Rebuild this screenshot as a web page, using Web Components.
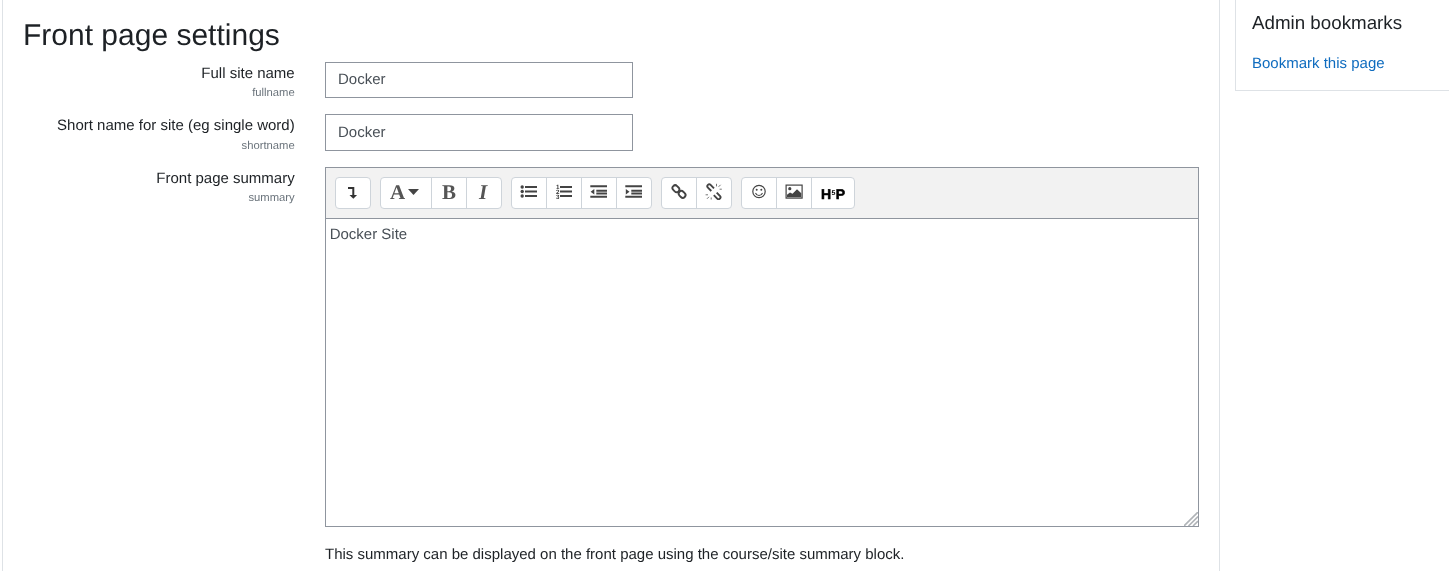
<!DOCTYPE html>
<html lang="en"><head><meta charset="utf-8"><title>Front page settings</title>
<style>
html,body{margin:0;height:571px;overflow:hidden;background:#fff;font:15px/22.5px "Liberation Sans",Arial,sans-serif;color:#1d2125;text-rendering:geometricPrecision}
</style></head><body>
<fp-page>
  <fp-main heading="Front page settings">
    <fp-row label="Full site name" name="fullname"><fp-input value="Docker"></fp-input></fp-row>
    <fp-row label="Short name for site (eg single word)" name="shortname"><fp-input value="Docker"></fp-input></fp-row>
    <fp-row label="Front page summary" name="summary">
      <fp-editor>Docker Site</fp-editor>
      <fp-help>This summary can be displayed on the front page using the course/site summary block.</fp-help>
    </fp-row>
  </fp-main>
  <fp-block slot="side" heading="Admin bookmarks"><a href="#">Bookmark this page</a></fp-block>
</fp-page>
<script>
function def(name,css,html){
  customElements.define(name,class extends HTMLElement{
    connectedCallback(){
      if(this.shadowRoot)return;
      const r=this.attachShadow({mode:'open'});
      r.innerHTML='<style>'+css+'</style>'+(typeof html==='function'?html(this):html);
    }
  });
}
const esc=s=>String(s||'').replace(/&/g,'&amp;').replace(/</g,'&lt;');
def('fp-page',`:host{display:flex;align-items:flex-start;height:571px;overflow:hidden;padding-left:2px;box-sizing:border-box;will-change:transform}
 ::slotted(fp-block){margin-left:15px}`,`<slot></slot><slot name="side"></slot>`);
def('fp-main',`:host{display:block;width:1218px;height:571px;box-sizing:border-box;border:solid #dee2e6;border-width:0 1px;padding:18px 20px 0}
 h2{margin:0 0 7.8px;font:400 30px/36px "Liberation Sans",Arial,sans-serif;color:#1d2125}`,
 h=>`<h2>${esc(h.getAttribute('heading'))}</h2><slot></slot>`);
def('fp-row',`:host{display:grid;grid-template-columns:271.7px 1fr;column-gap:30.3px;margin-bottom:16px}
 .l{text-align:right;height:36.5px;padding-top:1px;box-sizing:border-box}
 label{display:block;color:#1d2125}
 small{display:block;font-size:11.25px;line-height:16.5px;color:#6a737b;margin-top:-.1px}`,
 h=>`<div class="l"><label>${esc(h.getAttribute('label'))}</label><small>${esc(h.getAttribute('name'))}</small></div><div><slot></slot></div>`);
def('fp-input',`:host{display:block;width:308px;height:36.5px;box-sizing:border-box;border:1px solid #8f959e;padding:6.4px 12px 5px;color:#495057;background:#fff}`,
 h=>esc(h.getAttribute('value')));
def('fp-help',`:host{display:block;margin-top:17px}`,`<slot></slot>`);
def('fp-group',`:host{display:inline-flex;height:32px;box-sizing:border-box;border:1px solid #ced4da;border-radius:4px;background:#fff;overflow:hidden;margin-right:9px}
 ::slotted(fp-tool:not(:last-child)){border-right:1px solid #ced4da}
 ::slotted(fp-tool:last-child){width:34px}`,`<slot></slot>`);
def('fp-tool',`:host{display:flex;align-items:center;justify-content:center;box-sizing:border-box;width:35px;height:30px;color:#444}
 :host([w="51"]){width:51px}:host([w="42"]){width:42px !important}
 .g{font:700 21px/30px "Liberation Serif","Times New Roman",serif;color:#555;display:flex;align-items:center;margin-top:-2px}
 .i{font-style:italic;margin-left:-2px}
 .a{margin-right:3px}
 svg{display:block;margin-top:-2px}`,
 h=>{const t=h.getAttribute('text'),i=h.getAttribute('icon');
  if(t)return `<span class="g ${h.hasAttribute('it')?'i':''} ${h.hasAttribute('caret')?'a':''}">${t}${h.hasAttribute('caret')?'<svg width="11" height="6" viewBox="0 0 11 6" style="margin:1px 0 0 3px"><path d="M0 0h11L5.5 6z" fill="#444"/></svg>':''}</span>`;
  return ICONS[i]||'';});
const S=(b,w=18,h=18,v)=>`<svg width="${w}" height="${h}" viewBox="${v||`0 0 ${w} ${h}`}" fill="none">${b}</svg>`;
const ICONS={
 ret:S(`<path d="M4 5h5.3V13" stroke="#333" stroke-width="2"/><path d="M5.5 12h7.6L9.3 15.8z" fill="#333"/>`),
 ul:S(`<circle cx="2.2" cy="4" r="1.7" fill="#444"/><circle cx="2.2" cy="8.5" r="1.7" fill="#444"/><circle cx="2.2" cy="13" r="1.7" fill="#444"/><path d="M5 4h12M5 8.5h12M5 13h12" stroke="#444" stroke-width="2"/>`),
 ol:S(`<text x="1" y="6" font-family="Liberation Sans" font-weight="700" font-size="6.2" fill="#333">1</text><text x="1" y="11" font-family="Liberation Sans" font-weight="700" font-size="6.2" fill="#333">2</text><text x="1" y="16.4" font-family="Liberation Sans" font-weight="700" font-size="6.2" fill="#333">3</text><path d="M5 4h12M5 8.5h12M5 13h12" stroke="#444" stroke-width="2"/>`),
 out:S(`<path d="M.3 3.3h16.7M6.3 7.7h10.7M6.3 10.5h10.7M.3 13.7h16.7" stroke="#444" stroke-width="1.9"/><path d="M4.3 6v5.4L.6 8.7z" fill="#444"/>`),
 ind:S(`<path d="M.3 3.3h16.7M6.3 7.7h10.7M6.3 10.5h10.7M.3 13.7h16.7" stroke="#444" stroke-width="1.9"/><path d="M.8 6v5.4l3.7-2.7z" fill="#444"/>`),
 link:S(`<g stroke="#444" stroke-width="1.9"><rect x="2.2" y="3" width="7.4" height="5.4" rx="2.7" transform="rotate(45 5.9 5.7)"/><rect x="8.4" y="8.7" width="7.4" height="5.4" rx="2.7" transform="rotate(45 12.1 11.4)"/></g>`),
 unlink:S(`<path d="M6.3 8L2.9 4.6a1.9 1.9 0 0 1 2.7-2.7L9 5.3M11.7 9.6l3.2 3.3a1.9 1.9 0 0 1-2.7 2.7L8.8 12.2" stroke="#444" stroke-width="1.9"/><path d="M11.5 .8v2.6M13.6 3.8l2-2M14.6 6.2h2.2M.6 11.8h2.4M2 15.8l2-2M6.2 14.5v2" stroke="#666" stroke-width=".9"/>`),
 smile:S(`<circle cx="9" cy="8.5" r="6.2" stroke="#444" stroke-width="1.2"/><circle cx="6.7" cy="6.8" r="1" fill="#444"/><circle cx="11.3" cy="6.8" r="1" fill="#444"/><path d="M5.5 10c.8 1.7 2.1 2.5 3.5 2.5s2.7-.8 3.5-2.5" stroke="#444" stroke-width="1.1"/>`),
 image:S(`<rect x="1.1" y="2.1" width="16" height="13" stroke="#444" stroke-width="1.2" fill="#fff"/><circle cx="4.8" cy="5.7" r="1.6" fill="#444"/><path d="M2 14.2v-2.4l3-2.2 2.5 1.2L12 6.2l4.3 4v4z" fill="#444"/>`),
 h5p:`<span style="font:700 14px/30px 'Liberation Sans',Arial,sans-serif;color:#000;display:flex;align-items:center;-webkit-text-stroke:.55px #000;margin-top:2px">H<span style="font-size:7px;line-height:8px;margin:0 .3px;-webkit-text-stroke:0">5</span>P</span>`
};
def('fp-editor',`:host{display:block;width:874px;height:360px;box-sizing:border-box;border:1px solid #8f959e;position:relative;background:#fff}
 .bar{height:51px;box-sizing:border-box;background:#f2f2f2;border-bottom:1px solid #8f959e;padding:9px 0 0 9px;display:flex}
 .txt{padding:5px 3.7px;color:#495057}
 .grip{position:absolute;right:0;bottom:0;display:block}`,
 ()=>`<div class="bar">
 <fp-group><fp-tool icon="ret"></fp-tool></fp-group>
 <fp-group><fp-tool w="51" text="A" caret></fp-tool><fp-tool text="B"></fp-tool><fp-tool text="I" it></fp-tool></fp-group>
 <fp-group><fp-tool icon="ul"></fp-tool><fp-tool icon="ol"></fp-tool><fp-tool icon="out"></fp-tool><fp-tool icon="ind"></fp-tool></fp-group>
 <fp-group><fp-tool icon="link"></fp-tool><fp-tool icon="unlink"></fp-tool></fp-group>
 <fp-group><fp-tool icon="smile"></fp-tool><fp-tool icon="image"></fp-tool><fp-tool w="42" icon="h5p"></fp-tool></fp-group>
 </div><div class="txt"><slot></slot></div>
 <svg class="grip" width="14" height="14" viewBox="0 0 14 14"><path d="M0 14L14 0M4.5 14L14 4.5M9 14l5-5" stroke="#b0b4b8" stroke-width="1.6"/></svg>`);
def('fp-block',`:host{display:block;width:214px;box-sizing:border-box;border:solid #dee2e6;border-width:0 0 1px 1px;padding:11px 16px 16px;height:91px}
 h5{margin:0 0 18px;font:400 18.75px/24px "Liberation Sans",Arial,sans-serif;color:#1d2125}
 ::slotted(a){color:#0f6cbf;text-decoration:none}`,
 h=>`<h5>${esc(h.getAttribute('heading'))}</h5><slot></slot>`);
</script>
</body></html>
